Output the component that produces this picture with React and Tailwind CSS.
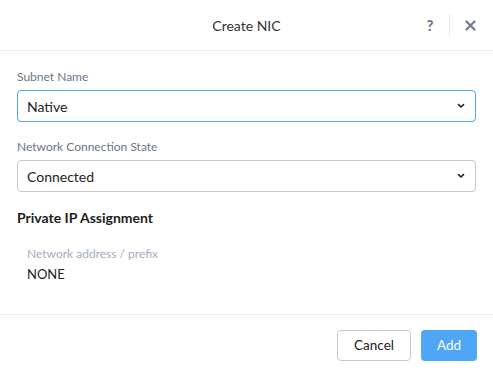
export default function App() {
  const font = { fontFamily: "Lato, 'Open Sans', sans-serif" };
  const Chevron = () => (
    <svg width="8" height="6" viewBox="0 0 8 6" className="shrink-0">
      <path d="M1.5 1.6 L4 4 L6.5 1.6" fill="none" stroke="#222" strokeWidth="1.6" strokeLinecap="round" strokeLinejoin="round" />
    </svg>
  );
  return (
    <div className="w-[493px] h-[378px] bg-white flex flex-col text-[#222]" style={font}>
      <div className="h-[51px] border-b border-[#ececec] flex items-center relative shrink-0">
        <div className="w-full text-center text-[14px] text-[#333]">Create NIC</div>
        <div className="absolute right-0 top-0 h-[50px] flex items-center">
          <span className="text-[15px] font-black text-[#6b7a8f] w-[20px] text-center">?</span>
          <div className="w-px h-[22px] bg-[#e6e8eb] ml-[9px] mr-[15px]"></div>
          <svg width="11" height="11" viewBox="0 0 11 11" className="mr-[17px]">
            <path d="M1.5 1.5 L9.5 9.5 M9.5 1.5 L1.5 9.5" stroke="#6b7a8f" strokeWidth="2.2" strokeLinecap="round" />
          </svg>
        </div>
      </div>
      <div className="h-[264px] border-b border-[#ececec] px-[17px] flex flex-col shrink-0">
        <div className="mt-[18px] h-[16px] leading-[16px] text-[12px] text-[#6b7685]">Subnet Name</div>
        <div className="mt-[5px] h-[32px] border border-[#4da4f5] rounded-[4px] flex items-center justify-between pl-[9px] pr-[10px]">
          <span className="text-[14px]">Native</span>
          <Chevron />
        </div>
        <div className="mt-[17px] h-[16px] leading-[16px] text-[12px] text-[#6b7685]">Network Connection State</div>
        <div className="mt-[5px] h-[32px] border border-[#c3c9d2] rounded-[4px] flex items-center justify-between pl-[9px] pr-[10px]">
          <span className="text-[14px]">Connected</span>
          <Chevron />
        </div>
        <div className="mt-[17px] h-[18px] leading-[18px] text-[14px] font-bold text-[#222]">Private IP Assignment</div>
        <div className="mt-[19px] ml-[10px] h-[16px] leading-[16px] text-[12px] text-[#a3adba]">Network address / prefix</div>
        <div className="mt-[3px] ml-[10px] h-[18px] leading-[18px] text-[13px] text-[#222]">NONE</div>
      </div>
      <div className="flex justify-end items-start pt-[15px] pr-[16px] gap-[10px]">
        <button className="w-[74px] h-[31px] border border-[#c3c9d2] rounded-[4px] text-[13.5px] text-[#222] bg-white">Cancel</button>
        <button className="w-[56px] h-[31px] rounded-[4px] text-[13.5px] text-white bg-[#4fa6f7]">Add</button>
      </div>
    </div>
  );
}
